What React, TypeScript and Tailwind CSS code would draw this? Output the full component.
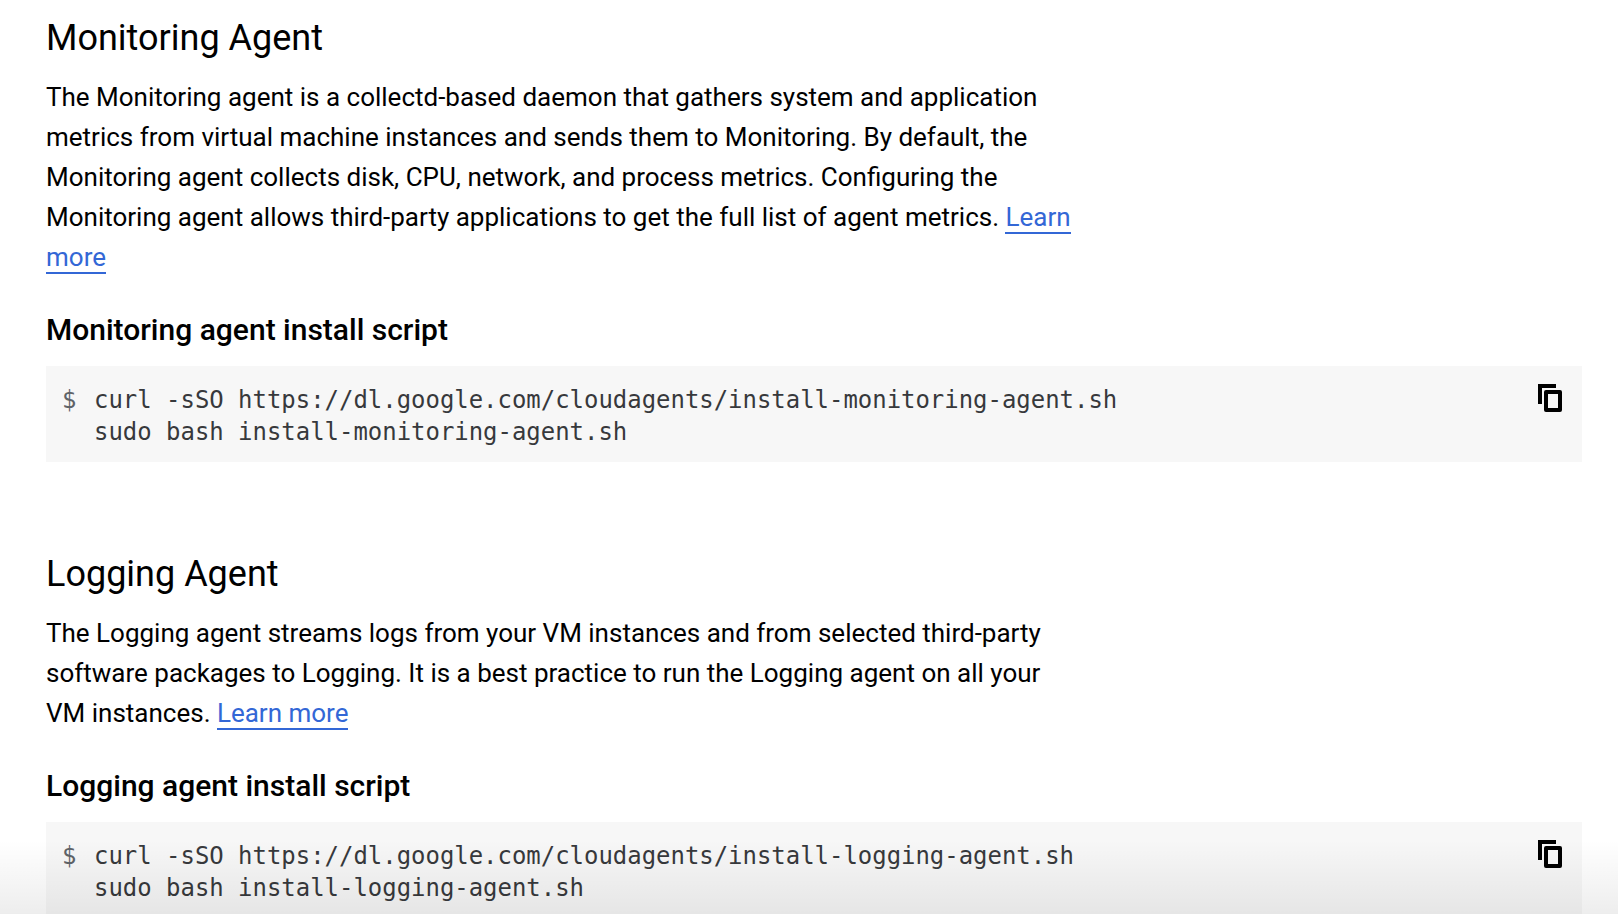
const sans = "font-['Roboto',sans-serif]";

function CopyIcon() {
  return (
    <svg viewBox="0 0 24 28" className="mt-[18px] mr-[20px] h-[28px] w-[24px] shrink-0 fill-black">
      <path d="M0 0h18v4H4v16H0z" />
      <path
        fillRule="evenodd"
        d="M8 6h14a2 2 0 0 1 2 2v18a2 2 0 0 1-2 2H8a2 2 0 0 1-2-2V8a2 2 0 0 1 2-2zm2 4v14h10V10z"
      />
    </svg>
  );
}

function CodeBlock({ first, second }: { first: string; second: string }) {
  return (
    <div className="mt-[16px] flex justify-between bg-[#f7f7f7]">
      <div className="flex pt-[18px] pb-[14px] pl-[16px] font-['DejaVu_Sans_Mono',monospace] text-[23.95px] leading-[32px] text-[#37393c] whitespace-pre">
        <span className="w-[32px] text-[#5f6368]">$</span>
        <div>
          <div>{first}</div>
          <div>{second}</div>
        </div>
      </div>
      <CopyIcon />
    </div>
  );
}

export default function App() {
  return (
    <div className={`relative h-[914px] overflow-hidden bg-white pl-[46px] pr-[36px] pt-[15px] text-black ${sans}`}>
      {/* Monitoring */}
      <h2 className="text-[36px] leading-[46px] font-normal">Monitoring Agent</h2>
      <p className="mt-[16px] w-[1030px] text-[26px] leading-[40px]">
        The Monitoring agent is a collectd-based daemon that gathers system and application metrics from virtual
        machine instances and sends them to Monitoring. By default, the Monitoring agent collects disk, CPU, network,
        and process metrics. Configuring the Monitoring agent allows third-party applications to get the full list of
        agent metrics.{' '}
        <a className="border-b-2 border-[#3367d6] text-[#3367d6]">Learn more</a>
      </p>
      <h3 className="mt-[33px] text-[30px] leading-[40px] font-medium">Monitoring agent install script</h3>
      <CodeBlock
        first="curl -sSO https://dl.google.com/cloudagents/install-monitoring-agent.sh"
        second="sudo bash install-monitoring-agent.sh"
      />

      {/* Logging */}
      <h2 className="mt-[89px] text-[36px] leading-[46px] font-normal">Logging Agent</h2>
      <p className="mt-[16px] w-[1030px] text-[26px] leading-[40px]">
        The Logging agent streams logs from your VM instances and from selected third-party software packages to
        Logging. It is a best practice to run the Logging agent on all your VM instances.{' '}
        <a className="border-b-2 border-[#3367d6] text-[#3367d6]">Learn more</a>
      </p>
      <h3 className="mt-[33px] text-[30px] leading-[40px] font-medium">Logging agent install script</h3>
      <CodeBlock
        first="curl -sSO https://dl.google.com/cloudagents/install-logging-agent.sh"
        second="sudo bash install-logging-agent.sh"
      />

      {/* bottom fade */}
      <div className="pointer-events-none absolute inset-x-0 bottom-0 h-[74px] bg-gradient-to-b from-transparent to-black/[0.07]" />
    </div>
  );
}
